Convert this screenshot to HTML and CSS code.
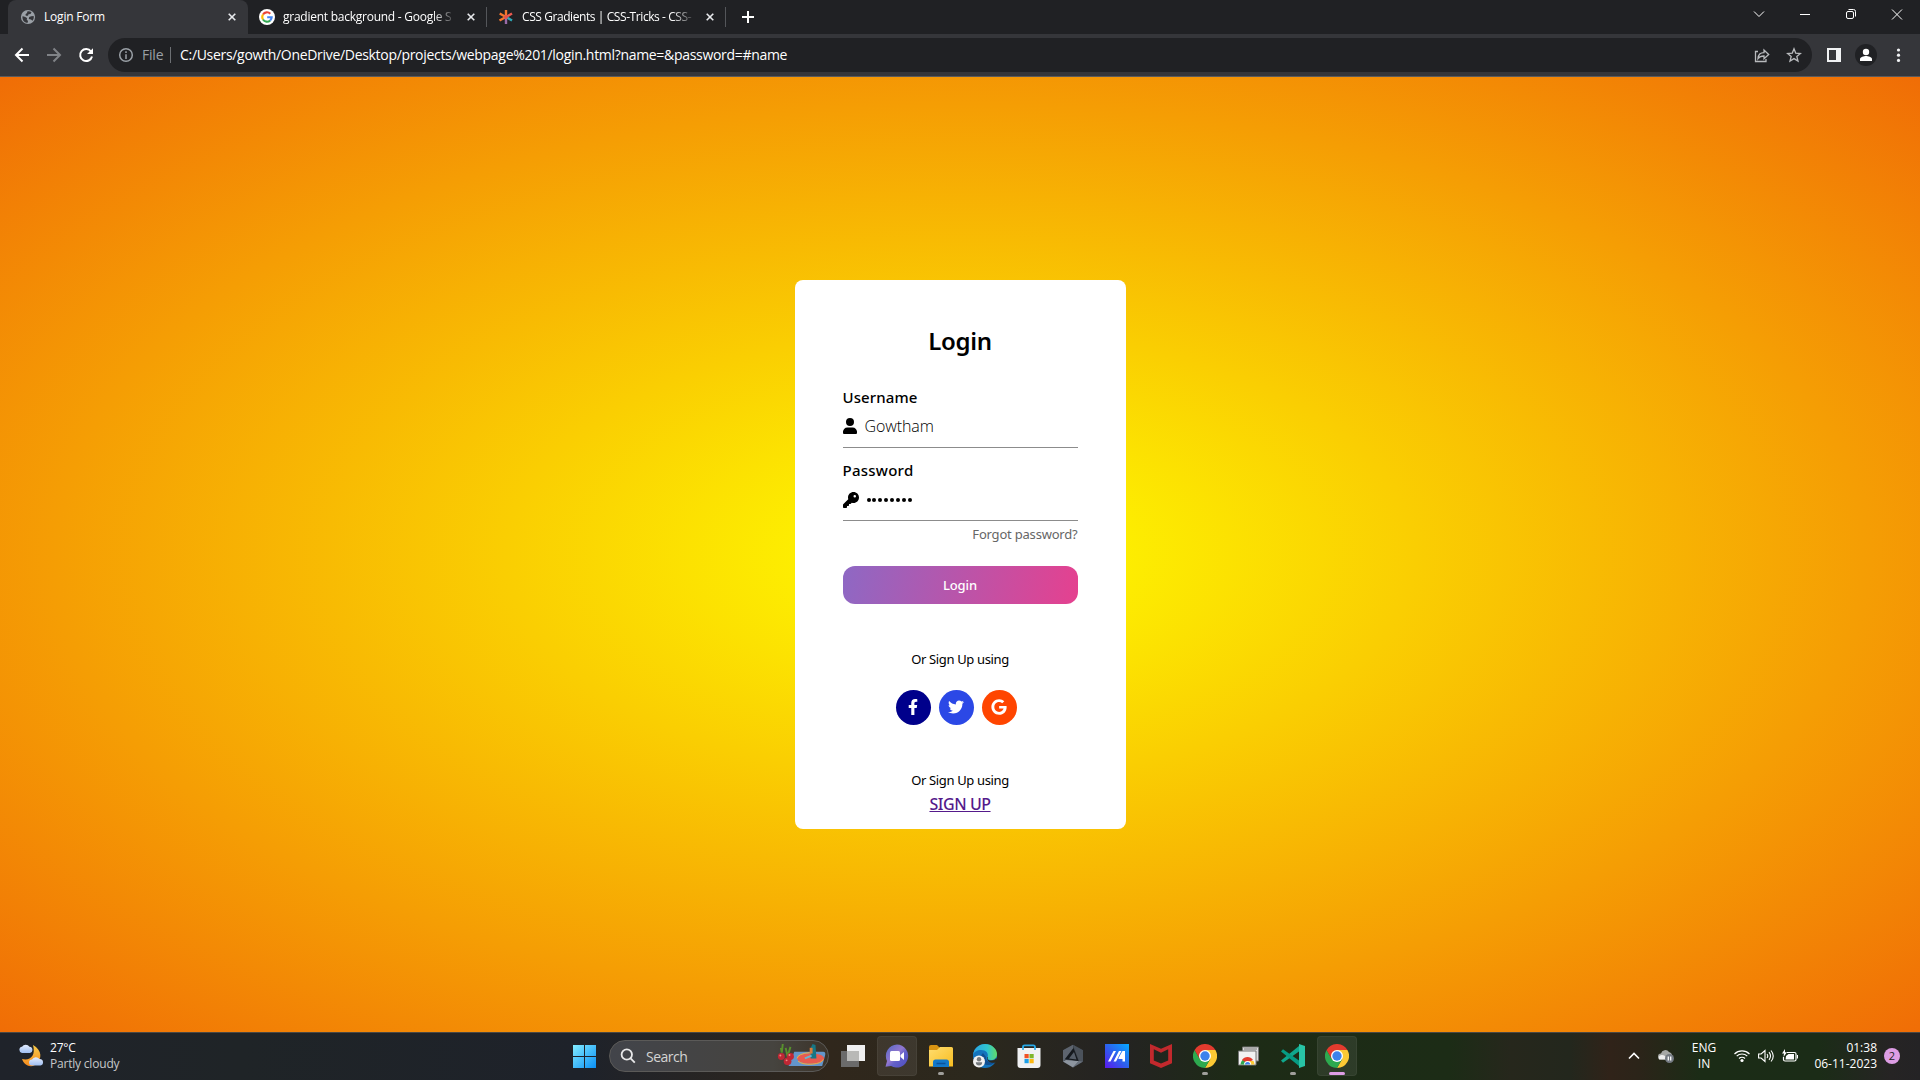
FILE: index.html
```html
<!DOCTYPE html>
<html lang="en">
<head>
<meta charset="utf-8">
<title>Login Form</title>
<link rel="stylesheet" href="styles.css">
</head>
<body>
<svg class="defs" width="0" height="0" aria-hidden="true">
  <defs>
    <linearGradient id="win" x1="0" y1="0" x2="1" y2="1"><stop offset="0" stop-color="#82ecff"/><stop offset="1" stop-color="#0a8ff5"/></linearGradient>
    <linearGradient id="chat" x1="0" y1="0" x2="1" y2="1"><stop offset="0" stop-color="#5267c4"/><stop offset=".45" stop-color="#9277cf"/><stop offset=".6" stop-color="#6260c8"/><stop offset="1" stop-color="#4d4cc0"/></linearGradient>
    <linearGradient id="folder" x1="0" y1="0" x2="1" y2="1"><stop offset="0" stop-color="#ffdd70"/><stop offset="1" stop-color="#f8bd20"/></linearGradient>
    <linearGradient id="edge" x1="0" y1="0" x2="1" y2="0"><stop offset="0" stop-color="#2aa3e3"/><stop offset=".6" stop-color="#30c5ce"/><stop offset="1" stop-color="#62dc67"/></linearGradient>
    <linearGradient id="ma" x1="0" y1="1" x2="1" y2="0"><stop offset="0" stop-color="#5b18ee"/><stop offset=".5" stop-color="#2c62ee"/><stop offset="1" stop-color="#05a9ff"/></linearGradient>
    <linearGradient id="moon" x1="0" y1="0" x2="0" y2="1"><stop offset="0" stop-color="#f9cc4a"/><stop offset="1" stop-color="#f58a1c"/></linearGradient>
    <linearGradient id="cloud" x1="0" y1="0" x2="0" y2="1"><stop offset="0" stop-color="#e4edff"/><stop offset="1" stop-color="#9fbef0"/></linearGradient>
    <symbol id="chrome" viewBox="0 0 24 24">
      <path d="M12 6h10.400A12 12 0 0 1 12 24l5.200-9Z" fill="#fcc934"/>
      <path d="M12 12 6.800 15 1.600 6A12 12 0 0 0 12 24l5.200-9Z" fill="#2da94f"/>
      <path d="M1.600 6A12 12 0 0 1 22.400 6H12L6.800 15Z" fill="#e33b2e"/>
      <circle cx="12" cy="12" r="6" fill="#fff"/><circle cx="12" cy="12" r="4.700" fill="#3b82ec"/>
    </symbol>
    <symbol id="x" viewBox="0 0 8 8"><path d="M.7.7 7.300 7.300M7.300.7.7 7.300" stroke="#e8eaed" stroke-width="1.600"/></symbol>
  </defs>
</svg>

<header class="browser">
  <div class="tabs">
    <div class="tab active">
      <svg class="fav" viewBox="0 0 16 16"><circle cx="8" cy="8" r="7.100" fill="#9aa0a6"/><path d="M2.500 7.200c2 .1 3.600 1 4.600 2.100l-.4 1.300 1.300 1.500-.3 1.700C4.500 14 2 11 2.500 7.200ZM7.500 2.300c1.700-.2 3 .2 4 1L10.500 5l-2 .3-.5 1.500H5.800L5.500 5.200 7 4ZM13.700 7c.4 2-.3 3.700-1.200 4.800L11 10.500 8.800 10l.4-2 2-.7Z" fill="#35363a"/></svg>
      <span class="name t1">Login Form</span>
      <svg class="close"><use href="#x"/></svg>
    </div>
    <div class="tab">
      <svg class="fav" viewBox="0 0 16 16"><circle cx="8" cy="8" r="8" fill="#fff"/><g fill="none" stroke-width="2.100"><path d="M4 5.500A4.700 4.700 0 0 1 11.300 4.700" stroke="#ea4335"/><path d="M4 5.500a4.700 4.700 0 0 0 0 5" stroke="#fbbc05"/><path d="M4 10.500a4.700 4.700 0 0 0 7.200.9" stroke="#34a853"/><path d="M11.200 11.400A4.700 4.700 0 0 0 12.700 8.200H8.200" stroke="#4285f4"/></g></svg>
      <span class="name t2">gradient background - Google S</span>
      <svg class="close"><use href="#x"/></svg>
    </div>
    <i class="tabsep"></i>
    <div class="tab third">
      <svg class="fav" viewBox="0 0 16 16"><g stroke-width="2.400"><path d="M8 1v6M1.700 4.500 7 7.500M1.500 11.500 7 8.500" stroke="#f4772e"/><path d="M8 8v7" stroke="#9a6ba8"/><path d="m9 7.500 5-3" stroke="#ec5a50"/><path d="m9 8.500 5 3" stroke="#2fa9b8"/></g><circle cx="8" cy="8" r="2" fill="#e2524d"/></svg>
      <span class="name t3">CSS Gradients | CSS-Tricks - CSS-</span>
      <svg class="close"><use href="#x"/></svg>
    </div>
    <i class="tabsep"></i>
    <svg class="plus" viewBox="0 0 12 12"><path d="M6 0v12M0 6h12" stroke="#fff" stroke-width="2"/></svg>
    <div class="winctl">
      <svg viewBox="0 0 46 28"><path d="m18 11.500 5 5 5-5" /></svg>
      <svg viewBox="0 0 46 28"><path d="M18 14.500h10"/></svg>
      <svg viewBox="0 0 46 28"><rect x="18.500" y="11.500" width="7" height="7" rx="1.500"/><path d="M20.500 9.500h5a2 2 0 0 1 2 2v5"/></svg>
      <svg viewBox="0 0 46 28"><path d="m18 9.500 10 10m0-10-10 10"/></svg>
    </div>
  </div>
  <div class="toolbar">
    <svg class="nav" viewBox="0 0 32 34"><path d="M29 17H16.500M22.500 10.500 16 17l6.500 6.500" stroke="#fff"/></svg>
    <svg class="nav" viewBox="0 0 32 34"><path d="M15 17h12.500M21.500 10.500 28 17l-6.500 6.500" stroke="#808387"/></svg>
    <svg class="nav" viewBox="0 0 32 34"><path d="M27 13.500A6 6 0 1 0 28 18.500" stroke="#fff"/><path d="M29 10.200v5.800h-6Z" fill="#fff"/></svg>
    <div class="omni">
      <svg class="info" viewBox="0 0 16 16"><circle cx="8" cy="8" r="6.300"/><path d="M8 7.200V12M8 4.200V5.900"/></svg>
      <span class="file">File</span><i class="osep"></i>
      <span class="url">C:/Users/gowth/OneDrive/Desktop/projects/webpage%201/login.html?name=&amp;password=#name</span>
      <svg class="oi share" viewBox="0 0 16 16"><path d="M4 4.500H1.500v10h10.500V12M4 11.500c.3-4 3-5.800 6-5.800V3l4.700 4.500-4.700 4.300V9C7.500 9 5.500 9.500 4 11.500Z"/></svg>
      <svg class="oi" viewBox="0 0 16 16"><path d="m8 1.800 1.700 4.300 4.700.4-3.600 3 1.200 4.600L8 11.600l-4 2.500 1.200-4.600-3.600-3 4.700-.4Z"/></svg>
    </div>
    <svg class="end" viewBox="0 0 32 34"><path d="M9 10h14v14H9Zm2 2v10h7V12Z" fill="#f1f3f4" fill-rule="evenodd"/></svg>
    <svg class="end" viewBox="0 0 32 34"><circle cx="16" cy="17" r="11" fill="#202124"/><circle cx="16" cy="14" r="3.200" fill="#fff"/><path d="M10 23v-2c0-2 4-3 6-3s6 1 6 3v2Z" fill="#fff"/></svg>
    <svg class="end" viewBox="0 0 32 34"><g fill="#f1f3f4"><circle cx="16.500" cy="12" r="1.600"/><circle cx="16.500" cy="17.200" r="1.600"/><circle cx="16.500" cy="22.400" r="1.600"/></g></svg>
  </div>
</header>

<main class="page">
  <form class="card">
    <h1>Login</h1>
    <label class="lab user">Username</label>
    <div class="field"><svg viewBox="0 0 14 16" width="14" height="16"><path d="M7 8a4 4 0 1 0 0-8 4 4 0 0 0 0 8ZM4.500 9.500h5a4.500 4.500 0 0 1 4.500 5c0 1-.5 1.500-1.300 1.500H1.300C.5 16 0 15.500 0 14.500a4.500 4.500 0 0 1 4.500-5Z"/></svg><span class="val">Gowtham</span></div>
    <label class="lab pass">Password</label>
    <div class="field key"><svg viewBox="0 0 512 512" width="16" height="16"><path d="M336 352c97.200 0 176-78.800 176-176S433.200 0 336 0 160 78.800 160 176c0 18.700 2.900 36.800 8.300 53.700L7 391c-4.500 4.500-7 10.600-7 17v80c0 13.300 10.700 24 24 24h80c13.300 0 24-10.700 24-24v-40h40c13.300 0 24-10.700 24-24v-40h40c6.400 0 12.500-2.500 17-7l33.300-33.300c16.900 5.400 35 8.300 53.700 8.300ZM376 96a40 40 0 1 1 0 80 40 40 0 1 1 0-80Z"/></svg><span class="dots"><i></i><i></i><i></i><i></i><i></i><i></i><i></i><i></i></span></div>
    <div class="forgot"><span>Forgot password?</span></div>
    <div class="btn"><span>Login</span></div>
    <p class="or"><span>Or Sign Up using</span></p>
    <div class="social">
      <i class="fb"><svg viewBox="0 0 320 512" width="10" height="16"><path d="m279.100 288 14.300-92.700h-89v-60.100c0-25.300 12.400-50 52.200-50H297V6.300S260.400 0 225.400 0c-73.200 0-121.100 44.400-121.100 124.700v70.600H22.900V288h81.400v224h100.200V288Z"/></svg></i>
      <i class="tw"><svg viewBox="0 0 512 512" width="16" height="16"><path d="M459.400 151.700c.3 4.500.3 9.100.3 13.600 0 138.700-105.600 298.600-298.600 298.600-59.500 0-114.700-17.200-161.100-47.100 8.400 1 16.600 1.300 25.300 1.300 49.100 0 94.200-16.600 130.300-44.800-46.100-1-84.800-31.200-98.100-72.800 6.500 1 13 1.600 19.800 1.600 9.400 0 18.800-1.300 27.600-3.600-48.100-9.700-84.100-52-84.100-103v-1.300c14 7.800 30.200 12.700 47.400 13.300-28.300-18.800-46.800-51-46.800-87.400 0-19.500 5.200-37.400 14.300-53 51.700 63.700 129.300 105.300 216.400 109.800-1.600-7.800-2.600-15.900-2.600-24 0-57.800 46.800-104.900 104.900-104.900 30.200 0 57.500 12.700 76.700 33.100 23.700-4.500 46.500-13.300 66.600-25.300-7.800 24.400-24.400 44.800-46.100 57.800 21.100-2.300 41.600-8.100 60.400-16.200-14.300 20.800-32.200 39.300-52.600 54.300Z"/></svg></i>
      <i class="gg"><svg viewBox="0 0 488 512" width="16" height="16"><path d="M488 261.800C488 403.300 391.100 504 248 504 110.800 504 0 393.200 0 256S110.800 8 248 8c66.800 0 123 24.500 166.300 64.900l-67.500 64.900C258.500 52.600 94.300 116.600 94.300 256c0 86.500 69.100 156.600 153.700 156.600 98.200 0 135-70.400 140.800-106.900H248v-85.300h236.100c2.300 12.700 3.900 24.900 3.900 41.400Z"/></svg></i>
    </div>
    <p class="or"><span>Or Sign Up using</span></p>
    <a class="signup">SIGN UP</a>
  </form>
</main>

<footer class="taskbar">
  <svg class="weather" viewBox="0 0 26 26"><path d="M15 2c9 5 10 14 2 20-5 3-11 0-13-6 8 2 14-3 11-14Z" fill="url(#moon)"/><path d="M4 10a3.200 3.200 0 0 1 0-6.300 4.500 4.500 0 0 1 7.500 0A3.200 3.200 0 0 1 12 10Z" fill="url(#cloud)"/><path d="M14 22.500a3 3 0 0 1 0-6 4.500 4.500 0 0 1 7.500-.5 3.300 3.300 0 0 1 1 6.500Z" fill="url(#cloud)"/></svg>
  <div class="wtext"><span class="deg">27°C</span><span class="cloudy">Partly cloudy</span></div>
  <div class="apps">
    <div class="app"><svg viewBox="0 0 24 24"><path d="M1 1h11v11H1Zm12 0h11v11H13ZM1 13h11v11H1Zm12 0h11v11H13Z" fill="url(#win)"/></svg></div>
    <div class="search">
      <svg class="mag" viewBox="0 0 16 16"><circle cx="6.800" cy="6.500" r="5.200"/><path d="m10.600 10.300 4.200 4.400"/></svg>
      <span>Search</span>
      <svg class="art" viewBox="0 0 52 28"><path d="M12 24 18 9h30q3 0 2 4l-3 11Z" fill="#6395cb"/><ellipse cx="35" cy="16" rx="14" ry="5.500" fill="#e75b50"/><path d="M21 16a15 6 0 0 1 13-6M22 19a14 6 0 0 0 26-2" stroke="#f3b13c" fill="none"/><path d="M35 16V5l2-4 3 1 1 14Z" fill="#167685"/><path d="M34 5h3v6h-3" fill="#d77b3c"/><path d="m29 16 7-3" stroke="#66b6d1" stroke-width="2"/><path d="m5 10-1-5m1 5 1-9m5 13-2-9m2 9 3-10" stroke="#58902d" stroke-width="2"/><g fill="#bf2734"><circle cx="4.500" cy="14" r="3.600"/><circle cx="14" cy="14" r="3.600"/><circle cx="11" cy="19" r="4"/></g><g fill="#ef8b85"><circle cx="3.500" cy="13" r="1"/><circle cx="10" cy="18" r="1"/><circle cx="13" cy="12.500" r="1"/></g></svg>
    </div>
    <div class="app"><svg viewBox="0 0 24 24"><path d="M6 1h18v16H6Z" fill="#f0f0f0"/><path d="M0 7h18v16H0Z" fill="#6b6b6b"/><path d="M6 7h12v10H6Z" fill="#b9b9b7"/></svg></div>
    <div class="app lit"><svg viewBox="0 0 24 24"><path d="M12 .5A11.500 11.500 0 1 1 6 22l-5.500.8L2 17A11.500 11.500 0 0 1 12 .5Z" fill="url(#chat)"/><rect x="5" y="7" width="10" height="10" rx="1.500" fill="#fff"/><path d="m15.500 11 3.500-3v8l-3.500-3Z" fill="#fff"/></svg></div>
    <div class="app run"><svg viewBox="0 0 24 24"><path d="M0 3q0-2 2-2h6l3 3v4H0Z" fill="#d99412"/><path d="M0 6h8l3-3h11.500Q24 3 24 4.500V22.500H0Z" fill="url(#folder)"/><path d="M4 23v-5q0-2.500 2.500-2.500h11Q20 15.500 20 18v5Z" fill="#1378c9"/><path d="M7.500 19.500h9" stroke="#0c529b" stroke-width="1.500"/></svg></div>
    <div class="app"><svg viewBox="0 0 24 24"><circle cx="12" cy="12" r="12" fill="#1374bd"/><path d="M0 11C1 4 6 0 12 0c7 0 12 5 12 10 0 4-3 6-6 6-3 0-4-1-3.500-2.500C16 9 13 6 8 6 4 6 1 8 0 11Z" fill="url(#edge)"/><path d="M10 9c-5 5-1 13 6 12 3 0 6-2 7-4-4 2-11 1-10-4Z" fill="#104f91"/><path d="M15 13c-1 2 0 3.500 3 3.500 2.500 0 4.500-.8 5.300-2.500l1 3-2 1.500c-4 1-8.500-1-8.300-5Z" fill="#2a281e"/><circle cx="6" cy="17.500" r="6" fill="#f1f1f1"/><circle cx="6" cy="15.300" r="2.200" fill="#74797c"/><path d="M2.800 18.200h6.400q-.2 3.300-3.200 3.300t-3.200-3.300Z" fill="#74797c"/></svg></div>
    <div class="app"><svg viewBox="0 0 24 24"><path d="M6 5V3q0-1.700 1.700-1.700h8.600Q18 1.300 18 3v2" fill="none" stroke="#28a9e7" stroke-width="1.800"/><path d="M.5 4h23v17q0 3-3 3H3.500q-3 0-3-3Z" fill="#f0f1f3"/><path d="M6 6V3M18 6V3" stroke="#28a9e7" stroke-width="1.600"/><path d="M7.500 10h4.200v4.200H7.500Z" fill="#f05125"/><path d="M12.500 10h4.200v4.200h-4.200Z" fill="#7eb62c"/><path d="M7.500 15h4.200v4.200H7.500Z" fill="#1c9fe8"/><path d="M12.500 15h4.200v4.200h-4.200Z" fill="#fcb813"/></svg></div>
    <div class="app"><svg viewBox="0 0 24 24"><path d="m12 .8 10 5.500v11.500l-10 5.700-10-5.700V6.300Z" fill="#3a4048"/><path d="M2 6.300 12 .8v4L4.500 15 2 17.500Z" fill="#5d646e"/><path d="M12 .8 22 6.300v11L18 17 13 4Z" fill="#4b525b"/><path d="m2 17.500 3-1.500 13 1-6 6.500Z" fill="#8d959f"/><path d="m12 23.500 6-6.500 4 .5Z" fill="#6a727d"/><path d="M12.500 4 17.500 17 4 15Z" fill="#15191e"/><path d="m13 8 2.500 7.500L8 14.500Z" fill="#555d68"/></svg></div>
    <div class="app"><svg viewBox="0 0 24 24"><path d="M0 0h24v24H0Z" fill="url(#ma)"/><path d="M3 17.500 8.500 7H11L5.500 17.500ZM8.500 17.500 14 7h2.500L11 17.500ZM13.500 14 17.500 7H20v10.500h-2.500V15h-4Z" fill="#fff"/></svg></div>
    <div class="app"><svg viewBox="0 0 24 24"><path d="m1 0 11 4.800L23 0v19.300L12 24 1 19.300Zm3.800 5.300v11.300l7.200 3 7.200-3V5.300L12 8.800Z" fill="#c2292d"/></svg></div>
    <div class="app run"><svg><use href="#chrome"/></svg></div>
    <div class="app"><svg viewBox="0 0 24 24"><path d="M5.500 3h16v14h-16Z" fill="#dadada" stroke="#777"/><path d="M7 5h13" stroke="#777"/><path d="M1.500 7h17.500v14H1.500Z" fill="#f2f2f2" stroke="#777"/><path d="M3.500 20.500a7 7 0 0 1 3.500-5.500l3 5.500Z" fill="#2da94f"/><path d="M5 16a6.500 6.500 0 0 1 11 0l-6 3Z" fill="#e33b2e"/><path d="m12 17 4.500 0q1 2 1 3.500H12Z" fill="#fcc934"/><path d="M7 20.500a3.600 3.600 0 0 1 7.200 0Z" fill="#fff"/><path d="M8 20.500a2.600 2.600 0 0 1 5.200 0Z" fill="#3b82ec"/></svg></div>
    <div class="app run"><svg viewBox="0 0 24 24"><path d="M18 0v24l6-2V2Z" fill="#28c4a6"/><path d="M18 2 0 16.500l2 2.300L18 7.500Z" fill="#10a78d"/><path d="M18 22 0 7.500l2-2.300L18 16.500Z" fill="#069b83"/></svg></div>
    <div class="app lit on"><svg><use href="#chrome"/></svg></div>
  </div>
  <div class="tray">
    <svg class="chev" viewBox="0 0 12 8"><path d="M1 6.500 6 1.500l5 5"/></svg>
    <svg class="one" viewBox="0 0 16 14"><path d="M3 10.500a3 3 0 0 1 0-6A4.500 4.500 0 0 1 11 3a4 4 0 0 1 3 5v2.500Z" fill="#a6a8a6"/><path d="M1 10.500C-.5 6 4 5 7 7l2 3.500Z" fill="#eee"/><circle cx="11.500" cy="9.500" r="4.500" fill="#747a82"/><path d="M10.300 7.500v4m2.400-4v4" stroke="#fff" stroke-width="1.300"/></svg>
    <div class="lang"><span>ENG</span><span>IN</span></div>
    <svg class="sys" viewBox="0 0 16 14"><g fill="none" stroke="#fff" stroke-width="1.200"><path d="M.5 5a10.500 10.500 0 0 1 15 0M2.700 7.200a7.500 7.500 0 0 1 10.600 0M5 9.500a4.300 4.300 0 0 1 6 0"/></g><circle cx="8" cy="11.500" r="1.600" fill="#fff"/></svg>
    <svg class="sys" viewBox="0 0 16 14"><g fill="none" stroke="#fff" stroke-width="1.100"><path d="M.6 5v4h2.500L7 12.500v-11L3.100 5ZM9 5q1.500 2 0 4M11 3.200q3 3.800 0 7.600M13 1.500q4.500 5.500 0 11"/></g></svg>
    <svg class="sys" viewBox="0 0 16 14"><path d="M5 3.500h7.500q1.500 0 1.500 1.500v5.500q0 1.500-1.500 1.500H3q-1.500 0-1.500-1.500V8" fill="none" stroke="#fff" stroke-width="1.200"/><path d="M4 7 6.500 5H12v5.500H3.500ZM15 6h1v3.500h-1ZM3 0 0 4.500h2L1.500 8 5 3.300H3Z" fill="#fff"/></svg>
    <div class="clock"><span class="time">01:38</span><span class="date">06-11-2023</span></div>
    <b class="badge">2</b>
  </div>
</footer>
</body>
</html>
```
FILE: styles.css
```css
* { box-sizing: border-box; }
html, body { margin: 0; height: 100%; }
body { width: 1920px; height: 1080px; overflow: hidden; display: flex; flex-direction: column; font-family: "Open Sans", "Noto Sans", sans-serif; font-size: 12px; color: #fff; }
svg { display: block; flex: none; }
.defs { position: absolute; }
i { font-style: normal; flex: none; }
span { white-space: nowrap; }

/* browser frame */
.browser { flex: none; height: 77px; background: #35363a; border-bottom: 1px solid #5a5b5e; }
.tabs { display: flex; align-items: center; height: 34px; padding-left: 8px; background: #202124; }
.tab { display: flex; align-items: center; width: 239px; height: 34px; padding: 0 12px 0 11px; flex: none; }
.tab.active { width: 240px; padding-left: 12px; background: #35363a; border-radius: 8px 8px 0 0; }
.tab.third { padding-left: 11px; }
.fav { width: 16px; height: 16px; }
.name { width: 172px; margin-left: 8px; line-height: 18px; }
.t1 { letter-spacing: -.2px; }
.t2 { letter-spacing: -.25px; mask-image: linear-gradient(90deg, #000 150px, transparent 174px); }
.t3 { letter-spacing: -.42px; mask-image: linear-gradient(90deg, #000 150px, transparent 174px); }
.close { width: 8px; height: 8px; margin-left: 12px; }
.tabsep { width: 1px; height: 20px; background: #54565a; margin-left: -1px; }
.plus { width: 12px; height: 12px; margin-left: 16px; }
.winctl { display: flex; align-self: flex-start; margin-left: auto; }
.winctl svg { width: 46px; height: 28px; fill: none; stroke: #fff; stroke-width: 1; }
.toolbar { display: flex; align-items: center; height: 42px; }
.nav { width: 32px; height: 34px; fill: none; stroke-width: 2; }
.omni { display: flex; align-items: center; width: 1704px; height: 34px; margin-left: 12px; padding: 0 10px; border-radius: 17px; background: #202124; font-size: 14px; }
.info { width: 16px; height: 16px; fill: none; stroke: #9aa0a6; stroke-width: 1.500; }
.file { width: 27px; margin-left: 8px; padding-bottom: 1px; color: #9aa0a6; letter-spacing: -.2px; }
.osep { width: 1px; height: 16px; margin-left: 1px; background: #6c6f73; }
.url { margin-left: 9px; padding-bottom: 1px; letter-spacing: -.31px; }
.oi { width: 16px; height: 16px; fill: none; stroke: #b8babd; stroke-width: 1.300; }
.share { margin-left: auto; margin-right: 16px; }
.end { width: 32px; height: 34px; }
.omni + .end { margin-left: 6px; }

/* login page */
.page { flex: none; height: 955px; display: flex; justify-content: center; padding-top: 203px; background: radial-gradient(yellow, #f06d06); }
.card { width: 331px; height: 549px; padding: 37px 48px 0; border-radius: 8px; background: #fff; color: #000; display: flex; flex-direction: column; font-family: "Noto Sans", "Open Sans", sans-serif; }
h1 { margin: 0 0 22px; font-size: 24px; line-height: 48px; font-weight: 600; text-align: center; letter-spacing: -.35px; }
.lab { font-size: 15px; line-height: 20px; font-weight: 500; letter-spacing: .1px; }
.pass { margin-top: 12px; letter-spacing: .25px; }
.field { display: flex; align-items: center; height: 41px; padding-bottom: 2px; border-bottom: 1px solid #8c8c8c; }
.field.key { padding-bottom: 0; }
.field svg { fill: #000; }
.val { margin-left: 8px; font: 300 16px "Open Sans", sans-serif; letter-spacing: -.1px; color: #000; }
.dots { display: flex; gap: 1.900px; margin-left: 8px; }
.dots i { width: 4px; height: 4px; border-radius: 50%; background: #000; }
.forgot { text-align: right; font-size: 13px; line-height: 18px; margin-top: 4px; color: #666; letter-spacing: -.2px; }
.btn { height: 38px; margin-top: 23px; border-radius: 12px; background: linear-gradient(100deg, #8e68c4, #e5418f); color: #fff; text-align: center; font-size: 13px; line-height: 38px; font-weight: 500; letter-spacing: -.1px; }
.or { margin: 45px 0 0; text-align: center; font-size: 13px; line-height: 20px; letter-spacing: -.35px; }
.social { display: flex; gap: 8px; margin: 21px 0 0 53px; }
.social + .or { margin-top: 45px; }
.social i { width: 35px; height: 35px; border-radius: 50%; display: flex; align-items: center; justify-content: center; padding: 0 1px 1px 0; }
.social svg { fill: #fff; }
.fb { background: #00008b; }
.tw { background: #2b48e6; }
.gg { background: #ff4500; }
.signup { align-self: center; font-size: 16px; line-height: 24px; margin-top: 2px; font-weight: 500; color: #551a8b; text-decoration: underline; letter-spacing: -.45px; }

/* taskbar */
.taskbar { flex: none; height: 48px; display: flex; align-items: center; padding-bottom: 1px; border-top: 1px solid #4a4844; background: linear-gradient(90deg, #1f232a 0, #1f2427 240px, #1e222a 580px, #30271c 830px, #2b281d 980px, #242322 1120px, #1d2b16 1240px, #1c2c16 1450px, #26271c 1510px, #23271d 1570px, #302319 1610px, #2b2419 1640px, #1b2c16 1700px, #1b2c17 1820px, #262424 1890px, #242325); }
.weather { width: 26px; height: 26px; margin-left: 18px; }
.wtext { display: flex; flex-direction: column; width: 90px; margin-left: 6px; line-height: 16px; }
.deg { letter-spacing: -.2px; }
.cloudy { color: #c6c8ca; letter-spacing: -.2px; }
.apps { display: flex; gap: 4px; margin-left: 424px; }
.app { position: relative; width: 40px; height: 40px; border-radius: 4px; display: flex; align-items: center; justify-content: center; }
.app svg { width: 24px; height: 24px; }
.lit { background: rgba(255,255,255,.08); border: 1px solid rgba(255,255,255,.05); }
.run::after, .on::after { content: ""; position: absolute; bottom: 1px; width: 6px; height: 3px; border-radius: 2px; background: #a09f9b; }
.on::after { width: 16px; bottom: 0; background: #dd9de4; }
.search { display: flex; align-items: center; width: 220px; height: 32px; align-self: center; margin-left: 1px; border-radius: 16px; background: linear-gradient(90deg, #42444a, #46443f 75%, #3b3329); border: 1px solid #5b5a58; font-size: 14px; color: #d4d4d4; }
.mag { width: 16px; height: 16px; margin-left: 10px; margin-right: 10px; fill: none; stroke: #e9e9ea; stroke-width: 1.800; }
.search span { width: 131px; letter-spacing: -.5px; }
.art { width: 50px; height: 27px; }
.tray { display: flex; align-items: center; margin-left: auto; margin-right: 20px; }
.chev { width: 12px; height: 8px; fill: none; stroke: #fff; stroke-width: 1.600; }
.one { width: 16px; height: 14px; margin-left: 18px; }
.lang { display: flex; flex-direction: column; align-items: center; width: 24px; margin-left: 18px; line-height: 16px; }
.sys { width: 16px; height: 14px; margin-left: 8px; }
.lang + .sys { margin-left: 18px; }
.clock { display: flex; flex-direction: column; align-items: flex-end; width: 64px; margin-left: 15px; line-height: 16px; }
.badge { width: 16px; height: 16px; margin-left: 7px; border-radius: 50%; background: #dd9de4; color: #222; font-size: 11px; line-height: 16px; font-weight: 400; text-align: center; }
```
